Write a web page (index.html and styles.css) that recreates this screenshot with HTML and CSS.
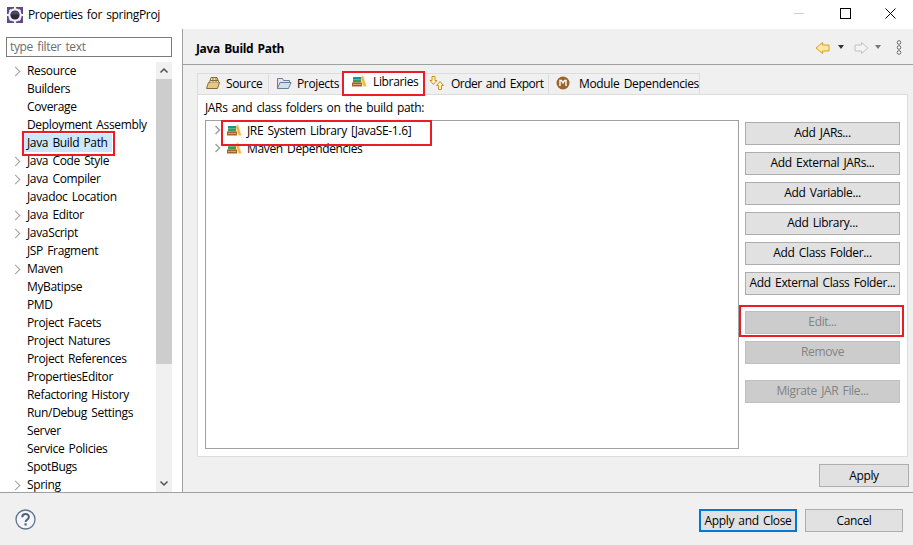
FILE: index.html
```html
<!DOCTYPE html>
<html lang="en">
<head>
<meta charset="utf-8">
<title>Properties for springProj</title>
<link rel="stylesheet" href="styles.css">
</head>
<body>
<div class="window">
  <header class="titlebar">
    <svg class="app-icon" width="16" height="16" viewBox="0 0 16 16"><rect x="0" y="0" width="16" height="16" fill="#5d4a86"/><circle cx="8" cy="8" r="6.800" fill="#f2f0f6"/><path d="M7 0h2v3H7zM7 13h2v3H7zM0 7h3v2H0zM13 7h3v2h-3zM2 3.500L3.500 2l2 2L4 5.500zM10.500 4l2-2L14 3.500l-2 2zM2 12.500L4 10.500 5.500 12l-2 2zM10.500 12l1.500-1.500 2 2L12.500 14z" fill="#f2f0f6"/><circle cx="8" cy="8" r="4.600" fill="#2c2a3c"/><path d="M3.800 7.500a4.300 4.300 0 0 1 8.400 0z" fill="#4c4a62"/></svg>
    <span class="title">Properties for springProj</span>
    <div class="winctl">
      <svg width="46" height="29" viewBox="0 0 46 29"><path d="M18 13.500h10" stroke="#ccc"/></svg>
      <svg width="46" height="29" viewBox="0 0 46 29"><rect x="18.500" y="8.500" width="10" height="10" fill="none" stroke="#000"/></svg>
      <svg width="46" height="29" viewBox="0 0 46 29"><path d="M17.500 8.500l10 10M27.500 8.500l-10 10" stroke="#000" fill="none"/></svg>
    </div>
  </header>
  <main class="main">
    <aside class="side">
      <div class="filter">type filter text</div>
      <div class="navwrap">
        <ul class="nav">
          <li class="exp">Resource</li>
          <li>Builders</li>
          <li>Coverage</li>
          <li>Deployment Assembly</li>
          <li class="sel"><span>Java Build Path</span></li>
          <li class="exp">Java Code Style</li>
          <li class="exp">Java Compiler</li>
          <li>Javadoc Location</li>
          <li class="exp">Java Editor</li>
          <li class="exp">JavaScript</li>
          <li>JSP Fragment</li>
          <li class="exp">Maven</li>
          <li>MyBatipse</li>
          <li>PMD</li>
          <li>Project Facets</li>
          <li>Project Natures</li>
          <li>Project References</li>
          <li>PropertiesEditor</li>
          <li>Refactoring History</li>
          <li>Run/Debug Settings</li>
          <li>Server</li>
          <li>Service Policies</li>
          <li>SpotBugs</li>
          <li class="exp">Spring</li>
        </ul>
        <div class="scrollbar">
          <svg class="sb-arrow" width="16" height="17" viewBox="0 0 16 17"><path d="M4.500 10.500L8 7l3.500 3.500" fill="none" stroke="#505050" stroke-width="1.500"/></svg>
          <div class="sb-track"><div class="sb-thumb"></div></div>
          <svg class="sb-arrow" width="16" height="17" viewBox="0 0 16 17"><path d="M4.500 6.500L8 10l3.500-3.500" fill="none" stroke="#505050" stroke-width="1.500"/></svg>
        </div>
      </div>
    </aside>
    <section class="content">
      <div class="pagehead">
        <h1>Java Build Path</h1>
        <div class="pagetools">
          <svg class="pt-back" width="15" height="14" viewBox="0 0 15 14"><path d="M7.500 1.500L1 7l6.500 5.500V10h6.500V4H7.500z" fill="#ffe9a8" stroke="#dd9c20"/></svg>
          <svg class="pt-dd1" width="8" height="5" viewBox="0 0 8 5"><path d="M1 0h6L4 4z" fill="#333"/></svg>
          <svg class="pt-fwd" width="15" height="14" viewBox="0 0 15 14"><path d="M7.500 1.500l6.500 5.500-6.500 5.500V10H1V4h6.500z" fill="#f4f4f4" stroke="#c0c0c0"/></svg>
          <svg class="pt-dd2" width="8" height="5" viewBox="0 0 8 5"><path d="M1 0h6L4 4z" fill="#777"/></svg>
          <svg class="pt-menu" width="6" height="15" viewBox="0 0 6 15"><g fill="#fff" stroke="#666"><circle cx="3" cy="2.500" r="1.800"/><circle cx="3" cy="7.500" r="1.800"/><circle cx="3" cy="12.500" r="1.800"/></g></svg>
        </div>
      </div>
      <div class="body">
        <div class="tabs">
          <div class="tab t-source"><svg width="16" height="14" viewBox="0 0 16 14"><path d="M1.500 12.500l2-6h11l-2 6z" fill="#e8c888" stroke="#8a6a30"/><path d="M4.500 6.500l1.500-5h6l2 5M8 2v4M11 2v4M5 4.500h8" fill="#f4e4c0" stroke="#8a6a30"/></svg>Source</div>
          <div class="tab t-projects"><svg width="16" height="14" viewBox="0 0 16 14"><path d="M1.500 12.500v-10h5l1 2h6v2" fill="#dfe6f0" stroke="#6a7c98"/><path d="M1.500 12.500l2.500-6h11l-2.500 6z" fill="#cfe0f4" stroke="#6a7c98"/><path d="M3 11.500l2-4h8.500" fill="none" stroke="#f2dca0"/></svg>Projects</div>
          <div class="tab active t-libraries"><svg width="16" height="14" viewBox="0 0 16 14"><use href="#lib"/></svg>Libraries</div>
          <div class="tab t-order"><svg class="ic-order" width="16" height="15" viewBox="0 0 16 15"><path d="M3 .500h3v4h2L4.500 8.500 1 4.500h2z" fill="#fff2c0" stroke="#c89420"/><path d="M11 5.500l3.500 4h-2v4h-3v-4h-2z" fill="#fff2c0" stroke="#c89420"/></svg>Order and Export</div>
          <div class="tab t-module"><svg class="ic-module" width="14" height="14" viewBox="0 0 14 14"><circle cx="7" cy="7" r="6.500" fill="#9c6428"/><path d="M4 10V4.500h1.500L7 7l1.500-2.500H10V10" fill="none" stroke="#fff" stroke-width="1.400"/></svg>Module Dependencies</div>
        </div>
        <div class="tabpane">
          <p class="hint">JARs and class folders on the build path:</p>
          <div class="panecols">
            <div class="tree">
              <div class="row"><svg class="chev" width="7" height="10" viewBox="0 0 7 10"><path d="M1.500 1l4 4-4 4" fill="none" stroke="#a0a0a0" stroke-width="1.500"/></svg><svg width="16" height="14" viewBox="0 0 16 14"><use href="#lib"/></svg><span>JRE System Library [JavaSE-1.6]</span></div>
              <div class="row"><svg class="chev" width="7" height="10" viewBox="0 0 7 10"><path d="M1.500 1l4 4-4 4" fill="none" stroke="#a0a0a0" stroke-width="1.500"/></svg><svg width="16" height="14" viewBox="0 0 16 14"><use href="#lib"/></svg><span>Maven Dependencies</span></div>
            </div>
            <div class="btns">
              <button class="btn">Add JARs...</button>
              <button class="btn">Add External JARs...</button>
              <button class="btn">Add Variable...</button>
              <button class="btn">Add Library...</button>
              <button class="btn">Add Class Folder...</button>
              <button class="btn">Add External Class Folder...</button>
              <button class="btn off b-sep">Edit...</button>
              <button class="btn off">Remove</button>
              <button class="btn off b-sep">Migrate JAR File...</button>
            </div>
          </div>
        </div>
        <div class="applyrow"><button class="btn b-apply">Apply</button></div>
      </div>
    </section>
  </main>
  <footer class="footer">
    <svg width="21" height="21" viewBox="0 0 21 21"><circle cx="10.500" cy="10.500" r="9.500" fill="#f4f6f9" stroke="#5f7290" stroke-width="1.300"/><path d="M7.300 8.200c0-4.200 6.600-4.200 6.600-.2 0 2.600-3.300 2.600-3.300 5" fill="none" stroke="#4f6280" stroke-width="2"/><rect x="9.500" y="14.300" width="2.200" height="2.200" fill="#4f6280"/></svg>
    <div class="footbtns">
      <button class="btn primary">Apply and Close</button>
      <button class="btn b-cancel">Cancel</button>
    </div>
  </footer>
  <div class="mark m-nav"></div>
  <div class="mark m-tab"></div>
  <div class="mark m-jre"></div>
  <div class="mark m-edit"></div>
</div>
<svg class="defs" width="0" height="0"><defs><g id="lib"><path d="M9.500 3.500L12 1.500 15.500 12.500 12.500 12.500z" fill="#f3b63c" stroke="#fbe2a8" stroke-width=".6"/><rect x="2" y="3" width="8" height="2.500" fill="#1f8f98"/><rect x="2" y="5.500" width="8" height="3" fill="#3f9a50"/><rect x="1" y="8.500" width="10" height="4" fill="#a8622f"/><path d="M2 10.500h8" stroke="#d8a070"/></g></defs></svg>
</body>
</html>
```
FILE: styles.css
```css
* { box-sizing: border-box; }
html, body { margin: 0; padding: 0; }
body {
  font-family: "Open Sans", "Noto Sans", sans-serif;
  font-size: 12px;
  letter-spacing: -0.35px;
  word-spacing: 1.5px;
  color: #000;
  background: #fff;
  overflow: hidden;
}
.defs { position: absolute; }
.window {
  position: relative;
  width: 913px;
  height: 545px;
  display: flex;
  flex-direction: column;
  overflow: hidden;
}
.titlebar {
  height: 29px;
  flex: none;
  display: flex;
  align-items: center;
  padding-left: 7px;
  background: #fff;
}
.title { margin-left: 5px; }
.winctl { margin-left: auto; display: flex; margin-right: -1px; }
.main { flex: none; height: 463px; display: flex; }
.side {
  width: 183px;
  flex: none;
  border-right: 1px solid #a0a0a0;
  display: flex;
  flex-direction: column;
  padding: 8px 10px 0 6px;
}
.filter {
  height: 20px;
  width: 166px;
  flex: none;
  border: 1px solid #7a7a7a;
  color: #6d6d6d;
  padding-left: 3px;
  line-height: 18px;
}
.navwrap { flex: 1; min-height: 0; display: flex; margin-top: 5px; overflow: hidden; }
.nav { list-style: none; margin: 0; padding: 0; width: 150px; flex: none; }
.nav li {
  height: 18px;
  line-height: 18px;
  padding-left: 21px;
  white-space: nowrap;
  position: relative;
}
.nav li.exp::before {
  content: "";
  position: absolute;
  left: 6px;
  top: 6px;
  width: 6px;
  height: 6px;
  border-top: 1.500px solid #a0a0a0;
  border-right: 1.500px solid #a0a0a0;
  transform: rotate(45deg);
}
.nav li.sel { padding-left: 18px; }
.nav li.sel span {
  display: inline-block;
  background: #cce8ff;
  padding: 0 4px 0 3px;
  height: 18px;
}
.scrollbar { width: 16px; flex: none; display: flex; flex-direction: column; background: #f0f0f0; }
.sb-arrow { flex: none; display: block; }
.sb-track { flex: 1; }
.sb-thumb { height: 285px; background: #cdcdcd; }
.content { flex: 1; min-width: 0; display: flex; flex-direction: column; background: #f0f0f0; }
.pagehead {
  height: 36px;
  flex: none;
  border-bottom: 1px solid #a0a0a0;
  display: flex;
  align-items: center;
  justify-content: space-between;
  padding: 2px 11px 0 13px;
}
h1 { margin: 2px 0 0; font-size: 12px; font-weight: 700; }
.pagetools { display: flex; align-items: center; }
.pt-dd1 { margin-left: 7px; }
.pt-fwd { margin-left: 9px; }
.pt-dd2 { margin-left: 5px; }
.pt-menu { margin-left: 14px; }
.body { flex: 1; min-height: 0; padding: 8px 5px 0 14px; display: flex; flex-direction: column; }
.tabs { display: flex; height: 21px; flex: none; align-items: flex-end; }
.tab {
  height: 21px;
  display: flex;
  align-items: center;
  gap: 5px;
  padding: 0 0 2px 7px;
  background: #f0f0f0;
  border: 1px solid #dcdcdc;
  border-bottom: 0;
  border-left-width: 0;
  white-space: nowrap;
}
.t-source { width: 72px; border-left-width: 1px; }
.t-projects { width: 74px; }
.t-libraries { width: 82px; padding-left: 8px; gap: 6px; }
.t-order { width: 124px; padding-left: 4px; gap: 6px; letter-spacing: -0.5px; }
.t-module { width: 151px; gap: 9px; }
.ic-module { margin-top: -1px; }
.ic-order { margin-top: 1px; }
.tab.active { background: #fff; height: 23px; border-color: #fff; padding-bottom: 4px; }
.tabpane {
  height: 363px;
  flex: none;
  background: #fff;
  border: 1px solid #dcdcdc;
  padding: 0 3px 0 7px;
  display: flex;
  flex-direction: column;
}
.hint { margin: 0; height: 25px; line-height: 25px; }
.panecols { flex: 1; display: flex; gap: 6px; min-height: 0; padding-bottom: 7px; }
.tree { width: 534px; flex: none; border: 1px solid #a0a0a0; }
.row { height: 18px; display: flex; align-items: center; padding-left: 8px; white-space: nowrap; }
.row svg + svg { margin-left: 5px; }
.row span { margin-left: 5px; }
.btns { flex: 1; display: flex; flex-direction: column; gap: 7px; padding-top: 2px; }
.btn {
  font: inherit;
  letter-spacing: inherit;
  word-spacing: inherit;
  height: 23px;
  width: 155px;
  flex: none;
  padding: 0 0 2px;
  background: #e1e1e1;
  border: 1px solid #adadad;
  color: #000;
  white-space: nowrap;
}
.btn.off { background: #cccccc; border-color: #bfbfbf; color: #838383; }
.b-sep { margin-top: 9px; }
.applyrow { flex: 1; display: flex; justify-content: flex-end; padding-top: 7px; }
.b-apply { width: 90px; margin-right: -1px; padding-bottom: 0; }
.footer {
  flex: 1;
  background: #f0f0f0;
  border-top: 1px solid #a0a0a0;
  display: flex;
  align-items: center;
  justify-content: space-between;
  padding: 0 10px 0 15px;
}
.footbtns { display: flex; gap: 8px; align-items: center; margin-top: 2px; }
.primary { width: 98px; border: 2px solid #0078d7; padding-bottom: 0; }
.b-cancel { width: 98px; padding-bottom: 0; }
.mark { position: absolute; border: 2px solid #ed1c24; pointer-events: none; }
.m-nav { left: 22px; top: 131px; width: 93px; height: 25px; }
.m-tab { left: 342px; top: 71px; width: 83px; height: 25px; }
.m-jre { left: 221px; top: 120px; width: 211px; height: 26px; }
.m-edit { left: 739px; top: 305px; width: 165px; height: 32px; }
```
